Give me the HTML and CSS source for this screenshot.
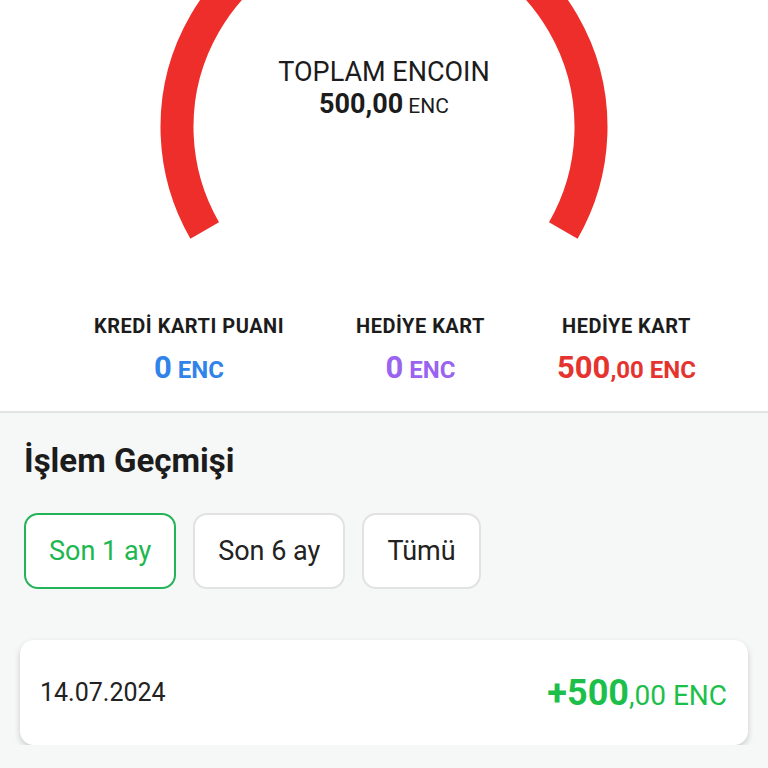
FILE: index.html
```html
<!DOCTYPE html>
<html lang="tr">
<head>
<meta charset="utf-8">
<title>Encoin</title>
<link rel="stylesheet" href="styles.css">
</head>
<body>
<div class="top">
	<div class="gauge">
		<svg class="arc" width="768" height="314" viewBox="0 0 768 314">
			<path d="M 204.7 230.5 A 207 207 0 1 1 563.3 230.5" fill="none" stroke="#ee2e2a" stroke-width="33"/>
		</svg>
		<div class="gaugetext">
			<div class="gaugetitle">TOPLAM ENCOIN</div>
			<div class="gaugeamount"><b>500,00</b> ENC</div>
		</div>
	</div>
	<div class="stats">
		<div class="stat">
			<div class="statlabel">KREDİ KARTI PUANI</div>
			<div class="statvalue blue"><span class="big">0</span> ENC</div>
		</div>
		<div class="stat">
			<div class="statlabel">HEDİYE KART</div>
			<div class="statvalue purple"><span class="big">0</span> ENC</div>
		</div>
		<div class="stat">
			<div class="statlabel">HEDİYE KART</div>
			<div class="statvalue red"><span class="big">500</span>,00 ENC</div>
		</div>
	</div>
</div>

<div class="history">
	<h2 class="historytitle">İşlem Geçmişi</h2>
	<div class="filters">
		<div class="filter active">Son 1 ay</div>
		<div class="filter">Son 6 ay</div>
		<div class="filter">Tümü</div>
	</div>
	<div class="entry">
		<div class="entrydate">14.07.2024</div>
		<div class="entryamount"><b>+500</b>,00 ENC</div>
	</div>
</div>
</body>
</html>
```

FILE: styles.css
```css
body {
	margin: 0;
	background: #f6f7f7;
	font-family: Roboto, "Liberation Sans", sans-serif;
	color: #1c1c1c;
}
.top {
	background: #fff;
	border-bottom: 2px solid #e2e3e3;
	padding-bottom: 23px;
}
.gauge {
	position: relative;
	height: 314px;
	overflow: hidden;
}
.arc {
	display: block;
}
.gaugetext {
	position: absolute;
	top: 56px;
	left: 0;
	right: 0;
	text-align: center;
}
.gaugetitle {
	font-size: 27px;
	line-height: 33px;
}
.gaugeamount {
	font-size: 21px;
	line-height: 30px;
}
.gaugeamount b {
	font-size: 27px;
}
.stats {
	display: flex;
	justify-content: space-evenly;
	padding-left: 22px;
}
.stat {
	text-align: center;
}
.statlabel {
	font-size: 20px;
	font-weight: bold;
	line-height: 24px;
	letter-spacing: 0.5px;
}
.statvalue {
	margin-top: 12px;
	font-size: 24px;
	font-weight: bold;
	line-height: 36px;
}
.statvalue .big {
	font-size: 31px;
}
.blue { color: #3083ea; }
.purple { color: #9a63f0; }
.red { color: #e5332f; }

.history {
	padding: 0 20px;
}
.historytitle {
	margin: 0;
	padding: 31px 4px 0;
	font-size: 33px;
	line-height: 34px;
	font-weight: bold;
}
.filters {
	display: flex;
	gap: 17px;
	margin: 35px 4px 0;
}
.filter {
	background: #fff;
	border: 2px solid #e2e2e2;
	border-radius: 14px;
	height: 72px;
	padding: 0 23px;
	display: flex;
	align-items: center;
	font-size: 27px;
	color: #222;
}
.filter.active {
	border-color: #23b457;
	color: #1db74f;
}
.entry {
	margin-top: 51px;
	background: #fff;
	border-radius: 14px;
	box-shadow: 0 3px 6px rgba(0, 0, 0, 0.18);
	height: 105px;
	display: flex;
	align-items: center;
	justify-content: space-between;
	padding: 0 21px 0 20px;
}
.entrydate {
	font-size: 25px;
	color: #222;
}
.entryamount {
	font-size: 28px;
	color: #1dbf4b;
}
.entryamount b {
	font-size: 36px;
}
```
